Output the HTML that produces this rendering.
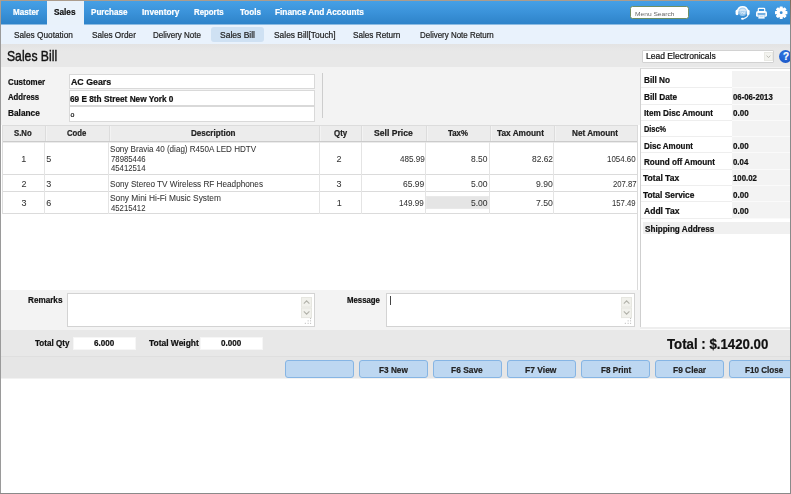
<!DOCTYPE html>
<html><head><meta charset="utf-8">
<style>
*{box-sizing:border-box;margin:0;padding:0}
html,body{width:791px;height:494px;overflow:hidden;background:#fff}
body{font-family:"Liberation Sans",sans-serif;font-size:9px;color:#222;position:relative}
.a{position:absolute}
.t{position:absolute;white-space:nowrap;line-height:1;transform-origin:0 50%;color:#222;-webkit-text-stroke:0.22px currentColor}
.hl{position:absolute;height:1px}
.vl{position:absolute;width:1px}
.btn{position:absolute;top:360px;height:18px;width:69px;background:#bdd7f1;border:1px solid #86b5e4;border-radius:3px}
.sb{position:absolute;width:10px;height:10px;background:#efefea;border:1px solid #e2e2dc;border-radius:1px}
</style></head><body>
<!-- nav -->
<div class="a" style="left:0;top:0;width:791px;height:24px;background:linear-gradient(#47a1e6,#3b93da 50%,#2e83c9)"></div>
<div class="a" style="left:0;top:24px;width:791px;height:1px;background:#8cbbe2"></div>
<div class="a" style="left:47px;top:1px;width:37px;height:24px;background:#e9f2fb"></div>
<div class="a" style="left:630px;top:6px;width:59px;height:13px;background:#fff;border:1px solid #6f8f63;border-radius:2.5px"></div>
<svg class="a" style="left:731px;top:0" width="60" height="25" viewBox="0 0 60 25">
 <!-- headset -->
 <path d="M6.4 11.2 A5.3 5.6 0 0 1 16.8 11.2" fill="#fff" fill-opacity=".55" stroke="#fff" stroke-width="1.6"/>
 <circle cx="11.6" cy="12.4" r="3.6" fill="#fff" opacity=".5"/>
 <path d="M9.4 11.6 L10.6 13.4 L11.8 12 L13 14 L14 11.6" fill="none" stroke="#fff" stroke-width=".8" opacity=".7"/>
 <rect x="4.6" y="9.8" width="2.9" height="5.4" rx="1.4" fill="#fff"/>
 <rect x="15.7" y="9.8" width="2.9" height="5.4" rx="1.4" fill="#fff"/>
 <path d="M17.2 14.6 Q16.4 17.8 12.4 18.6" fill="none" stroke="#fff" stroke-width="1.1"/>
 <ellipse cx="11.5" cy="18.7" rx="1.5" ry="1" fill="#fff"/>
 <!-- printer -->
 <rect x="27.3" y="8.3" width="6.4" height="3.6" rx=".8" fill="none" stroke="#fff" stroke-width="1.2"/>
 <rect x="25" y="11" width="11" height="6" rx="1.8" fill="#fff" opacity=".95"/>
 <rect x="26.6" y="13.3" width="7.8" height="1.3" fill="#3a8fd6"/>
 <rect x="27.2" y="15" width="6.6" height="3.8" rx=".6" fill="#fff" stroke="#3a8fd6" stroke-opacity=".55" stroke-width=".7"/>
 <rect x="28.4" y="16.4" width="4.2" height=".8" fill="#3a8fd6" opacity=".5"/>
 <!-- gear -->
 <g transform="translate(50.2,12.7)" fill="#fff">
  <rect x="-1.6" y="-6.2" width="3.2" height="12.4" rx=".6"/>
  <rect x="-1.6" y="-6.2" width="3.2" height="12.4" rx=".6" transform="rotate(45)"/>
  <rect x="-1.6" y="-6.2" width="3.2" height="12.4" rx=".6" transform="rotate(90)"/>
  <rect x="-1.6" y="-6.2" width="3.2" height="12.4" rx=".6" transform="rotate(135)"/>
  <circle r="4.6"/>
  <circle r="1.4" fill="#3a8fd6"/>
 </g>
</svg>
<!-- submenu -->
<div class="a" style="left:0;top:25px;width:791px;height:19px;background:#e9f2fc"></div>
<div class="a" style="left:211px;top:27px;width:53px;height:15px;background:#cfe1f3;border-radius:3px"></div>
<!-- title bar -->
<div class="a" style="left:0;top:44px;width:791px;height:23px;background:linear-gradient(#e3e3e3,#e8e8e8 30%,#e8e8e8)"></div>
<div class="a" style="left:642px;top:50px;width:132px;height:13px;background:#fff;border:1px solid #d2d2d2;border-radius:1px"></div>
<div class="a" style="left:764px;top:52px;width:9px;height:9px;background:#f3f3ef;border:1px solid #e9e9e4"></div>
<svg class="a" style="left:764px;top:52px" width="9" height="9" viewBox="0 0 9 9"><path d="M2.6 3.6 L4.5 5.6 L6.4 3.6" fill="none" stroke="#bdbdb6" stroke-width="1"/></svg>
<div class="a" style="left:779px;top:50px;width:13px;height:13px;border-radius:7px;background:radial-gradient(circle at 40% 35%,#2e74e0,#164fc0)"></div>
<span class="t" style="left:783px;top:52px;font-size:10px;font-weight:bold;color:#fff">?</span>
<!-- main -->
<div class="a" style="left:0;top:67px;width:791px;height:263px;background:#f3f3f3"></div>
<div class="a" style="left:69px;top:74px;width:246px;height:15px;background:#fff;border:1px solid #d9d9d9"></div>
<div class="a" style="left:69px;top:90px;width:246px;height:16px;background:#fff;border:1px solid #d9d9d9"></div>
<div class="a" style="left:69px;top:106px;width:246px;height:16px;background:#fff;border:1px solid #d9d9d9"></div>
<div class="vl" style="left:322px;top:73px;height:45px;background:#cdcdcd"></div>
<!-- grid -->
<div class="a" style="left:1px;top:125px;width:639px;height:165px;background:#fff"></div>
<div class="a" style="left:2px;top:125px;width:636px;height:16px;background:#ececec;border-top:1px solid #dcdcdc"></div>
<div class="hl" style="left:2px;top:141px;width:636px;background:#cbcbcb"></div>
<div class="hl" style="left:2px;top:142px;width:636px;background:#ebebeb"></div>
<div class="hl" style="left:2px;top:174px;width:636px;background:#dbdbdb"></div>
<div class="hl" style="left:2px;top:191px;width:636px;background:#dbdbdb"></div>
<div class="hl" style="left:2px;top:213px;width:636px;background:#dbdbdb"></div>
<div class="a" style="left:426px;top:196px;width:63px;height:13px;background:#e5e5e5;border:1px solid #e9e9e9"></div>
<div class="vl" style="left:2px;top:125px;height:89px;background:#dedede"></div>
<div class="vl" style="left:45px;top:126px;height:15px;background:#dcdcdc"></div><div class="vl" style="left:46px;top:126px;height:15px;background:#f3f3f3"></div><div class="vl" style="left:109px;top:126px;height:15px;background:#dcdcdc"></div><div class="vl" style="left:110px;top:126px;height:15px;background:#f3f3f3"></div><div class="vl" style="left:319px;top:126px;height:15px;background:#dcdcdc"></div><div class="vl" style="left:320px;top:126px;height:15px;background:#f3f3f3"></div><div class="vl" style="left:361px;top:126px;height:15px;background:#dcdcdc"></div><div class="vl" style="left:362px;top:126px;height:15px;background:#f3f3f3"></div><div class="vl" style="left:426px;top:126px;height:15px;background:#dcdcdc"></div><div class="vl" style="left:427px;top:126px;height:15px;background:#f3f3f3"></div><div class="vl" style="left:490px;top:126px;height:15px;background:#dcdcdc"></div><div class="vl" style="left:491px;top:126px;height:15px;background:#f3f3f3"></div><div class="vl" style="left:554px;top:126px;height:15px;background:#dcdcdc"></div><div class="vl" style="left:555px;top:126px;height:15px;background:#f3f3f3"></div>
<div class="vl" style="left:44px;top:142px;height:72px;background:#e4e4e4"></div>
<div class="vl" style="left:108px;top:142px;height:72px;background:#e4e4e4"></div>
<div class="vl" style="left:319px;top:142px;height:72px;background:#e4e4e4"></div>
<div class="vl" style="left:361px;top:142px;height:72px;background:#e4e4e4"></div>
<div class="vl" style="left:425px;top:142px;height:72px;background:#e4e4e4"></div>
<div class="vl" style="left:489px;top:142px;height:72px;background:#e4e4e4"></div>
<div class="vl" style="left:553px;top:142px;height:72px;background:#e4e4e4"></div>
<div class="vl" style="left:637px;top:125px;height:165px;background:#dadada"></div>
<!-- right panel -->
<div class="a" style="left:640px;top:68px;width:151px;height:259px;background:#fff;border-left:1px solid #cfcfcf;border-top:1px solid #dadada"></div>
<div class="a" style="left:640px;top:327px;width:151px;height:2px;background:#eee"></div><div class="a" style="left:640px;top:329px;width:151px;height:1px;background:#fbfbfb"></div>
<div class="a" style="left:732px;top:71px;width:58px;height:147px;background:#f3f3f3"></div>
<div class="a" style="left:643px;top:222px;width:147px;height:12px;background:#f0f0f0"></div>
<div class="hl" style="left:641px;top:87px;width:91px;background:#eeeeee"></div><div class="hl" style="left:732px;top:87px;width:58px;background:#fafafa"></div>
<div class="hl" style="left:641px;top:104px;width:91px;background:#eeeeee"></div><div class="hl" style="left:732px;top:104px;width:58px;background:#fafafa"></div>
<div class="hl" style="left:641px;top:120px;width:91px;background:#eeeeee"></div><div class="hl" style="left:732px;top:120px;width:58px;background:#fafafa"></div>
<div class="hl" style="left:641px;top:136px;width:91px;background:#eeeeee"></div><div class="hl" style="left:732px;top:136px;width:58px;background:#fafafa"></div>
<div class="hl" style="left:641px;top:152px;width:91px;background:#eeeeee"></div><div class="hl" style="left:732px;top:152px;width:58px;background:#fafafa"></div>
<div class="hl" style="left:641px;top:169px;width:91px;background:#eeeeee"></div><div class="hl" style="left:732px;top:169px;width:58px;background:#fafafa"></div>
<div class="hl" style="left:641px;top:185px;width:91px;background:#eeeeee"></div><div class="hl" style="left:732px;top:185px;width:58px;background:#fafafa"></div>
<div class="hl" style="left:641px;top:201px;width:91px;background:#eeeeee"></div><div class="hl" style="left:732px;top:201px;width:58px;background:#fafafa"></div>
<div class="hl" style="left:641px;top:218px;width:91px;background:#eeeeee"></div><div class="hl" style="left:732px;top:218px;width:58px;background:#fafafa"></div>
<!-- remarks -->
<div class="a" style="left:67px;top:293px;width:248px;height:34px;background:#fff;border:1px solid #d3d3d3"></div>
<div class="a" style="left:386px;top:293px;width:249px;height:34px;background:#fff;border:1px solid #d3d3d3"></div>
<div class="a" style="left:390px;top:296px;width:1px;height:9px;background:#444"></div>
<svg class="a" style="left:301px;top:297px" width="12" height="30" viewBox="0 0 12 30"><rect x=".5" y=".5" width="10" height="9.6" fill="#f1f1ec" stroke="#e6e6e0"/><rect x=".5" y="11" width="10" height="9.6" fill="#f1f1ec" stroke="#e6e6e0"/><g fill="none" stroke="#b2b2aa" stroke-width="1.1"><path d="M2.8 6.6 L5.6 3.8 L8.4 6.6"/><path d="M2.8 14.4 L5.6 17.2 L8.4 14.4"/></g><g fill="#c2c2c2"><rect x="9" y="21" width="1.1" height="1.1"/><rect x="6.6" y="23.3" width="1.1" height="1.1"/><rect x="9" y="23.3" width="1.1" height="1.1"/><rect x="3.8" y="25.8" width="1.1" height="1.1"/><rect x="6.6" y="25.8" width="1.1" height="1.1"/><rect x="9" y="25.8" width="1.1" height="1.1"/></g></svg>
<svg class="a" style="left:620.5px;top:297px" width="12" height="30" viewBox="0 0 12 30"><rect x=".5" y=".5" width="10" height="9.6" fill="#f1f1ec" stroke="#e6e6e0"/><rect x=".5" y="11" width="10" height="9.6" fill="#f1f1ec" stroke="#e6e6e0"/><g fill="none" stroke="#b2b2aa" stroke-width="1.1"><path d="M2.8 6.6 L5.6 3.8 L8.4 6.6"/><path d="M2.8 14.4 L5.6 17.2 L8.4 14.4"/></g><g fill="#c2c2c2"><rect x="9" y="21" width="1.1" height="1.1"/><rect x="6.6" y="23.3" width="1.1" height="1.1"/><rect x="9" y="23.3" width="1.1" height="1.1"/><rect x="3.8" y="25.8" width="1.1" height="1.1"/><rect x="6.6" y="25.8" width="1.1" height="1.1"/><rect x="9" y="25.8" width="1.1" height="1.1"/></g></svg>
<!-- totals bar -->
<div class="a" style="left:0;top:330px;width:791px;height:26px;background:#e8e8e8"></div>
<div class="a" style="left:0;top:356px;width:791px;height:22px;background:#e6e6e6;border-top:1px solid #dfdfdf"></div>
<div class="a" style="left:0;top:378px;width:791px;height:1px;background:#f2f2f2"></div>
<div class="a" style="left:73px;top:337px;width:63px;height:13px;background:#fff;border:1px solid #f6f6f6"></div>
<div class="a" style="left:200px;top:337px;width:63px;height:13px;background:#fff;border:1px solid #f6f6f6"></div>
<!-- buttons -->
<div class="btn" style="left:284.5px"></div>
<div class="btn" style="left:358.5px"></div>
<div class="btn" style="left:432.5px"></div>
<div class="btn" style="left:506.5px"></div>
<div class="btn" style="left:580.5px"></div>
<div class="btn" style="left:654.5px"></div>
<div class="btn" style="left:728.5px"></div>
<div class="a" style="left:0;top:0;width:791px;height:494px;will-change:transform">
<span class="t" style="left:12.82px;top:8.43px;font-size:9px;font-weight:bold;color:#fff;transform:scaleX(0.8965);">Master</span>
<span class="t" style="left:90.75px;top:8.43px;font-size:9px;font-weight:bold;color:#fff;transform:scaleX(0.8979);">Purchase</span>
<span class="t" style="left:142.33px;top:8.43px;font-size:9px;font-weight:bold;color:#fff;transform:scaleX(0.9226);">Inventory</span>
<span class="t" style="left:194.36px;top:8.43px;font-size:9px;font-weight:bold;color:#fff;transform:scaleX(0.8709);">Reports</span>
<span class="t" style="left:239.76px;top:8.43px;font-size:9px;font-weight:bold;color:#fff;transform:scaleX(0.8972);">Tools</span>
<span class="t" style="left:274.80px;top:8.43px;font-size:9px;font-weight:bold;color:#fff;transform:scaleX(0.9187);">Finance And Accounts</span>
<span class="t" style="left:53.75px;top:8.43px;font-size:9px;font-weight:bold;color:#111;transform:scaleX(0.9151);">Sales</span>
<span class="t" style="left:635.07px;top:10.57px;font-size:6px;color:#666;-webkit-text-stroke-width:0px;transform:scaleX(1.1031);">Menu Search</span>
<span class="t" style="left:14.13px;top:30.53px;font-size:9px;transform:scaleX(0.9194);">Sales Quotation</span>
<span class="t" style="left:91.54px;top:30.53px;font-size:9px;transform:scaleX(0.9137);">Sales Order</span>
<span class="t" style="left:153.16px;top:30.53px;font-size:9px;transform:scaleX(0.8874);">Delivery Note</span>
<span class="t" style="left:220.09px;top:30.53px;font-size:9px;transform:scaleX(0.9445);">Sales Bill</span>
<span class="t" style="left:273.53px;top:30.53px;font-size:9px;transform:scaleX(0.9328);">Sales Bill[Touch]</span>
<span class="t" style="left:353.16px;top:30.53px;font-size:9px;transform:scaleX(0.9089);">Sales Return</span>
<span class="t" style="left:419.59px;top:30.53px;font-size:9px;transform:scaleX(0.8833);">Delivery Note Return</span>
<span class="t" style="left:7.18px;top:49.29px;font-size:14.6px;color:#111;-webkit-text-stroke-width:0.4px;transform:scaleX(0.8347);">Sales Bill</span>
<span class="t" style="left:645.54px;top:52.43px;font-size:9px;color:#111;transform:scaleX(0.9476);">Lead Electronicals</span>
<span class="t" style="left:7.86px;top:78.03px;font-size:9px;font-weight:bold;color:#111;transform:scaleX(0.8844);">Customer</span>
<span class="t" style="left:7.95px;top:92.53px;font-size:9px;font-weight:bold;color:#111;transform:scaleX(0.8644);">Address</span>
<span class="t" style="left:7.67px;top:109.03px;font-size:9px;font-weight:bold;color:#111;transform:scaleX(0.9207);">Balance</span>
<span class="t" style="left:70.91px;top:78.03px;font-size:9px;font-weight:bold;color:#111;transform:scaleX(0.9802);">AC Gears</span>
<span class="t" style="left:69.90px;top:94.53px;font-size:9px;font-weight:bold;color:#111;transform:scaleX(0.9170);">69 E 8th Street New York 0</span>
<span class="t" style="left:70.44px;top:110.72px;font-size:7px;color:#111;transform:scaleX(1.0000);">o</span>
<span class="t" style="left:14.38px;top:129.03px;font-size:9px;font-weight:bold;transform:scaleX(0.8609);">S.No</span>
<span class="t" style="left:66.83px;top:129.03px;font-size:9px;font-weight:bold;transform:scaleX(0.8596);">Code</span>
<span class="t" style="left:191.20px;top:129.03px;font-size:9px;font-weight:bold;transform:scaleX(0.8992);">Description</span>
<span class="t" style="left:334.02px;top:129.03px;font-size:9px;font-weight:bold;transform:scaleX(0.8761);">Qty</span>
<span class="t" style="left:374.38px;top:129.03px;font-size:9px;font-weight:bold;transform:scaleX(0.9561);">Sell Price</span>
<span class="t" style="left:447.79px;top:129.03px;font-size:9px;font-weight:bold;transform:scaleX(0.8737);">Tax%</span>
<span class="t" style="left:497.49px;top:129.03px;font-size:9px;font-weight:bold;transform:scaleX(0.9195);">Tax Amount</span>
<span class="t" style="left:572.20px;top:129.03px;font-size:9px;font-weight:bold;transform:scaleX(0.9100);">Net Amount</span>
<span class="t" style="left:21.17px;top:154.53px;font-size:9px;color:#333;-webkit-text-stroke-width:0.05px;transform:scaleX(1.0000);">1</span>
<span class="t" style="left:46.23px;top:154.53px;font-size:9px;color:#333;-webkit-text-stroke-width:0.05px;transform:scaleX(1.0000);">5</span>
<span class="t" style="left:336.60px;top:154.53px;font-size:9px;color:#333;-webkit-text-stroke-width:0.05px;transform:scaleX(1.0000);">2</span>
<span class="t" style="left:399.81px;top:154.53px;font-size:9px;color:#333;-webkit-text-stroke-width:0.05px;transform:scaleX(0.9018);">485.99</span>
<span class="t" style="left:471.26px;top:154.53px;font-size:9px;color:#333;-webkit-text-stroke-width:0.05px;transform:scaleX(0.9354);">8.50</span>
<span class="t" style="left:531.79px;top:154.53px;font-size:9px;color:#333;-webkit-text-stroke-width:0.05px;transform:scaleX(0.9312);">82.62</span>
<span class="t" style="left:607.36px;top:154.53px;font-size:9px;color:#333;-webkit-text-stroke-width:0.05px;transform:scaleX(0.8807);">1054.60</span>
<span class="t" style="left:110.45px;top:144.53px;font-size:9px;color:#333;-webkit-text-stroke-width:0.05px;transform:scaleX(0.8961);">Sony Bravia 40 (diag) R450A LED HDTV</span>
<span class="t" style="left:110.62px;top:154.53px;font-size:9px;color:#333;-webkit-text-stroke-width:0.05px;transform:scaleX(0.8617);">78985446</span>
<span class="t" style="left:110.81px;top:164.23px;font-size:9px;color:#333;-webkit-text-stroke-width:0.05px;transform:scaleX(0.8606);">45412514</span>
<span class="t" style="left:21.59px;top:179.53px;font-size:9px;color:#333;-webkit-text-stroke-width:0.05px;transform:scaleX(1.0000);">2</span>
<span class="t" style="left:46.27px;top:179.53px;font-size:9px;color:#333;-webkit-text-stroke-width:0.05px;transform:scaleX(1.0000);">3</span>
<span class="t" style="left:336.52px;top:179.53px;font-size:9px;color:#333;-webkit-text-stroke-width:0.05px;transform:scaleX(1.0000);">3</span>
<span class="t" style="left:110.45px;top:179.53px;font-size:9px;color:#333;-webkit-text-stroke-width:0.05px;transform:scaleX(0.9084);">Sony Stereo TV Wireless RF Headphones</span>
<span class="t" style="left:403.26px;top:179.53px;font-size:9px;color:#333;-webkit-text-stroke-width:0.05px;transform:scaleX(0.9426);">65.99</span>
<span class="t" style="left:471.10px;top:179.53px;font-size:9px;color:#333;-webkit-text-stroke-width:0.05px;transform:scaleX(0.9464);">5.00</span>
<span class="t" style="left:535.80px;top:179.53px;font-size:9px;color:#333;-webkit-text-stroke-width:0.05px;transform:scaleX(0.9571);">9.90</span>
<span class="t" style="left:612.90px;top:179.53px;font-size:9px;color:#333;-webkit-text-stroke-width:0.05px;transform:scaleX(0.8567);">207.87</span>
<span class="t" style="left:21.55px;top:199.03px;font-size:9px;color:#333;-webkit-text-stroke-width:0.05px;transform:scaleX(1.0000);">3</span>
<span class="t" style="left:46.28px;top:199.03px;font-size:9px;color:#333;-webkit-text-stroke-width:0.05px;transform:scaleX(1.0000);">6</span>
<span class="t" style="left:336.69px;top:199.03px;font-size:9px;color:#333;-webkit-text-stroke-width:0.05px;transform:scaleX(1.0000);">1</span>
<span class="t" style="left:110.40px;top:193.53px;font-size:9px;color:#333;-webkit-text-stroke-width:0.05px;transform:scaleX(0.9285);">Sony Mini Hi-Fi Music System</span>
<span class="t" style="left:110.81px;top:204.03px;font-size:9px;color:#333;-webkit-text-stroke-width:0.05px;transform:scaleX(0.8601);">45215412</span>
<span class="t" style="left:399.34px;top:199.03px;font-size:9px;color:#333;-webkit-text-stroke-width:0.05px;transform:scaleX(0.8972);">149.99</span>
<span class="t" style="left:471.10px;top:199.03px;font-size:9px;color:#333;-webkit-text-stroke-width:0.05px;transform:scaleX(0.9460);">5.00</span>
<span class="t" style="left:535.56px;top:199.03px;font-size:9px;color:#333;-webkit-text-stroke-width:0.05px;transform:scaleX(0.9650);">7.50</span>
<span class="t" style="left:612.38px;top:199.03px;font-size:9px;color:#333;-webkit-text-stroke-width:0.05px;transform:scaleX(0.8578);">157.49</span>
<span class="t" style="left:643.64px;top:76.23px;font-size:9px;font-weight:bold;color:#111;transform:scaleX(0.9149);">Bill No</span>
<span class="t" style="left:643.64px;top:92.58px;font-size:9px;font-weight:bold;color:#111;transform:scaleX(0.9209);">Bill Date</span>
<span class="t" style="left:733.43px;top:92.58px;font-size:9px;font-weight:bold;color:#111;transform:scaleX(0.8628);">06-06-2013</span>
<span class="t" style="left:643.64px;top:108.93px;font-size:9px;font-weight:bold;color:#111;transform:scaleX(0.9056);">Item Disc Amount</span>
<span class="t" style="left:733.46px;top:108.93px;font-size:9px;font-weight:bold;color:#111;transform:scaleX(0.8914);">0.00</span>
<span class="t" style="left:643.69px;top:125.28px;font-size:9px;font-weight:bold;color:#111;transform:scaleX(0.8181);">Disc%</span>
<span class="t" style="left:643.65px;top:141.63px;font-size:9px;font-weight:bold;color:#111;transform:scaleX(0.8881);">Disc Amount</span>
<span class="t" style="left:733.46px;top:141.63px;font-size:9px;font-weight:bold;color:#111;transform:scaleX(0.8914);">0.00</span>
<span class="t" style="left:643.64px;top:157.98px;font-size:9px;font-weight:bold;color:#111;transform:scaleX(0.9022);">Round off Amount</span>
<span class="t" style="left:733.43px;top:157.98px;font-size:9px;font-weight:bold;color:#111;transform:scaleX(0.8705);">0.04</span>
<span class="t" style="left:643.43px;top:174.33px;font-size:9px;font-weight:bold;color:#111;transform:scaleX(0.9480);">Total Tax</span>
<span class="t" style="left:733.33px;top:174.33px;font-size:9px;font-weight:bold;color:#111;transform:scaleX(0.8701);">100.02</span>
<span class="t" style="left:643.43px;top:190.68px;font-size:9px;font-weight:bold;color:#111;transform:scaleX(0.9284);">Total Service</span>
<span class="t" style="left:733.46px;top:190.68px;font-size:9px;font-weight:bold;color:#111;transform:scaleX(0.8914);">0.00</span>
<span class="t" style="left:643.88px;top:207.03px;font-size:9px;font-weight:bold;color:#111;transform:scaleX(0.9484);">Addl Tax</span>
<span class="t" style="left:733.46px;top:207.03px;font-size:9px;font-weight:bold;color:#111;transform:scaleX(0.8914);">0.00</span>
<span class="t" style="left:644.79px;top:224.63px;font-size:9px;font-weight:bold;color:#111;transform:scaleX(0.9049);">Shipping Address</span>
<span class="t" style="left:27.69px;top:296.23px;font-size:9px;font-weight:bold;color:#111;transform:scaleX(0.9051);">Remarks</span>
<span class="t" style="left:346.71px;top:296.23px;font-size:9px;font-weight:bold;color:#111;transform:scaleX(0.8670);">Message</span>
<span class="t" style="left:35.47px;top:339.33px;font-size:9px;font-weight:bold;color:#111;transform:scaleX(0.8964);">Total Qty</span>
<span class="t" style="left:93.97px;top:339.33px;font-size:9px;font-weight:bold;color:#111;transform:scaleX(0.8997);">6.000</span>
<span class="t" style="left:148.81px;top:339.33px;font-size:9px;font-weight:bold;color:#111;transform:scaleX(0.9370);">Total Weight</span>
<span class="t" style="left:221.47px;top:339.33px;font-size:9px;font-weight:bold;color:#111;transform:scaleX(0.8993);">0.000</span>
<span class="t" style="left:667.23px;top:337.19px;font-size:14.6px;font-weight:bold;color:#111;transform:scaleX(0.9076);">Total : $.1420.00</span>
<span class="t" style="left:378.69px;top:365.63px;font-size:9px;font-weight:bold;transform:scaleX(0.9133);">F3 New</span>
<span class="t" style="left:451.18px;top:365.63px;font-size:9px;font-weight:bold;transform:scaleX(0.9330);">F6 Save</span>
<span class="t" style="left:525.18px;top:365.63px;font-size:9px;font-weight:bold;transform:scaleX(0.9434);">F7 View</span>
<span class="t" style="left:600.71px;top:365.63px;font-size:9px;font-weight:bold;transform:scaleX(0.9015);">F8 Print</span>
<span class="t" style="left:672.74px;top:365.63px;font-size:9px;font-weight:bold;transform:scaleX(0.9324);">F9 Clear</span>
<span class="t" style="left:744.71px;top:365.63px;font-size:9px;font-weight:bold;transform:scaleX(0.8991);">F10 Close</span>
</div>
<!-- frame -->
<div class="a" style="left:0;top:0;width:791px;height:1px;background:#ac9c8c"></div>
<div class="a" style="left:0;top:0;width:1px;height:494px;background:linear-gradient(#b0a090,#9a9a9a 30px,#9a9a9a)"></div>
<div class="a" style="left:790px;top:0;width:1px;height:494px;background:linear-gradient(#7a6a5c,#8a8a8a 30px,#8a8a8a)"></div>
<div class="a" style="left:0;top:493px;width:791px;height:1px;background:#8a8a8a"></div>
</body></html>
